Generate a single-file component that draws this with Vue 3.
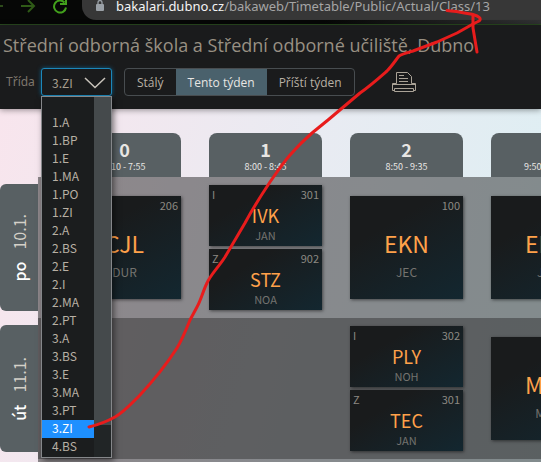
<script setup>
import { ref } from 'vue'

const classes = ['', '1.A', '1.BP', '1.E', '1.MA', '1.PO', '1.ZI', '2.A', '2.BS', '2.E', '2.I', '2.MA', '2.PT', '3.A', '3.BS', '3.E', '3.MA', '3.PT', '3.ZI', '4.BS']
const selected = ref('3.ZI')

const weeks = ['Stálý', 'Tento týden', 'Příští týden']
const week = ref('Tento týden')

const periods = [
  { n: 0, time: '7:10 - 7:55' },
  { n: 1, time: '8:00 - 8:45' },
  { n: 2, time: '8:50 - 9:35' },
  { n: 3, time: '9:50 - 10:35' }
]

const days = [
  {
    name: 'po', date: '10.1.', cells: [
      [{ s: 'CJL', t: 'DUR', room: '206' }],
      [{ s: 'IVK', t: 'JAN', room: '301', g: 'I' }, { s: 'STZ', t: 'NOA', room: '902', g: 'Z' }],
      [{ s: 'EKN', t: 'JEC', room: '100' }],
      [{ s: 'EKN', t: 'JEC', room: '' }]
    ]
  },
  {
    name: 'út', date: '11.1.', cells: [
      [],
      [],
      [{ s: 'PLY', t: 'NOH', room: '302', g: 'I' }, { s: 'TEC', t: 'JAN', room: '301', g: 'Z' }],
      [{ s: 'MAT', t: 'MAR', room: '' }]
    ]
  }
]
</script>

<template>
  <div class="page">
    <div class="browser">
      <svg class="nav" viewBox="0 0 80 24" width="80" height="24" fill="none" aria-hidden="true">
        <path d="M0 6h3" stroke="#2c4a1a" stroke-width="2" />
        <path d="M21 6h13M28 0l6 6-6 6" stroke="#2f5a17" stroke-width="2" />
        <path d="M64.500 2.500a6 6 0 1 0 1.500 5M66 -1v5h-6" stroke="#42a01c" stroke-width="2" />
      </svg>
      <div class="address">
        <svg class="lock" viewBox="0 0 8 12" width="8" height="12" aria-hidden="true">
          <rect y="4" width="8" height="7" rx="1" fill="#9aa0a6" />
          <path d="M2 5V2.500a2 2 0 0 1 4 0V5" fill="none" stroke="#9aa0a6" stroke-width="1.300" />
        </svg>
        <span class="url"><b>bakalari.dubno.cz</b>/bakaweb/Timetable/Public/Actual/Class/13</span>
      </div>
    </div>

    <header class="header">
      <h1>Střední odborná škola a Střední odborné učiliště, Dubno</h1>
      <div class="controls">
        <label for="class-select">Třída</label>
        <div class="picker">
          <select id="class-select" v-model="selected">
            <option v-for="c in classes" :key="c" :value="c">{{ c }}</option>
          </select>
          <svg class="chevron" viewBox="0 0 22 12" width="22" height="12" fill="none" aria-hidden="true">
            <path d="M1 1l10 9.500L21 1" stroke="#c9c4bb" stroke-width="1.500" />
          </svg>
          <div class="menu">
            <ul role="listbox" aria-label="Třída">
              <li v-for="c in classes" :key="c" role="option" :aria-selected="c === selected" :class="{ active: c === selected, blank: !c }" @click="selected = c">{{ c }}</li>
            </ul>
            <div class="track"><div class="thumb"></div></div>
          </div>
        </div>
        <div class="weeks">
          <button v-for="w in weeks" :key="w" type="button" :class="{ on: w === week }" @click="week = w">{{ w }}</button>
        </div>
        <button class="print" type="button" aria-label="Tisk">
          <svg viewBox="0 0 26 22" width="26" height="22" fill="none" stroke="#aaa397" aria-hidden="true">
            <path d="M5.500 12.500V1.500h11l4 4v7" />
            <path d="M8 4.500h5M8 7.500h9M8 10.500h9" />
            <path d="M5.500 12.500h-4v7h2M20.500 12.500h4v7h-2M1.500 13.500h23" />
            <path d="M3.500 17.500h19v3h-19z" />
          </svg>
        </button>
      </div>
    </header>

    <main class="board">
      <table>
        <thead>
          <tr>
            <td class="corner"></td>
            <th v-for="p in periods" :key="p.n" scope="col">
              <div class="period"><b>{{ p.n }}</b><span>{{ p.time }}</span></div>
            </th>
          </tr>
        </thead>
        <tbody>
          <tr v-for="d in days" :key="d.name">
            <th class="day" scope="row">
              <div class="tab"><span><b>{{ d.name }}</b>{{ d.date }}</span></div>
            </th>
            <td v-for="(cell, i) in d.cells" :key="i">
              <div class="stack" :class="{ split: cell.length > 1 }">
                <article v-for="l in cell" :key="l.s" class="lesson">
                  <span class="top"><span>{{ l.g }}</span><span>{{ l.room }}</span></span>
                  <strong>{{ l.s }}</strong>
                  <small>{{ l.t }}</small>
                </article>
              </div>
            </td>
          </tr>
          <tr>
            <td class="day"></td>
            <td v-for="p in periods" :key="p.n"><div class="stack"></div></td>
          </tr>
        </tbody>
      </table>
    </main>

    <svg class="ink" viewBox="0 0 541 462" width="541" height="462" fill="none" stroke="#e81c1c" stroke-width="3" stroke-linecap="round" stroke-linejoin="round" aria-hidden="true">
      <path d="M447 10.500C455 11 465 13 473 14.500C479 16 482 19 479 21C477 22 475 23 473 24L457 33L437 42L413 51C406 53 402 54 399 56C395 61 392 66 387 71C379 78 370 86 360 93L328 120L312 133C304 140 297 147 290 155C283 163 277 172 270 182C260 197 252 210 245 223L225 257C218 268 211 274 207 283C203 291 201 300 197 307L190 320C186 330 182 340 177 348C166 365 154 380 140 395C131 404 124 412 115 417C106 422 97 425 89 427" />
      <path d="M473 15L473 28L477 52" />
    </svg>
  </div>
</template>

<style>
body {
  margin: 0;
  background: #1a1b1c;
}
</style>

<style scoped>
.page {
  position: relative;
  height: 100vh;
  display: flex;
  flex-direction: column;
  overflow: hidden;
  font-family: "Noto Sans CJK SC", "Noto Sans", sans-serif;
  color: #aaa397;
}

.browser {
  display: flex;
  flex: none;
  height: 24px;
  background: linear-gradient(90deg, #060706 60%, #303132);
  border-bottom: 1px solid #2a4a20;
}

.address {
  display: flex;
  flex: 1;
  gap: 12px;
  height: 20px;
  margin-left: 2px;
  padding-left: 14px;
  background: #373737;
  border-bottom-left-radius: 14px;
}

.url {
  font: 13px/13px "Noto Sans", sans-serif;
  color: #a5a5a5;
  white-space: nowrap;
}

.url b {
  font-weight: 400;
  color: #f4f4f4;
}

.header {
  flex: none;
  position: relative;
  z-index: 2;
  padding: 5px 3px 13px;
  background: #1a1b1c;
  box-shadow: 0 1px 6px rgba(0, 0, 0, 0.4);
}

h1 {
  margin: 0;
  font-family: "Open Sans", sans-serif;
  font-size: 18px;
  line-height: 30px;
  font-weight: 400;
  color: #989083;
  white-space: nowrap;
}

.controls {
  display: flex;
  align-items: center;
  margin-top: 8px;
  font-size: 12px;
}

label {
  width: 38px;
  box-sizing: border-box;
  padding-left: 3px;
  font-family: "Noto Sans", sans-serif;
  line-height: 28px;
  color: #7d766c;
}

.picker {
  position: relative;
  width: 71px;
  height: 28px;
}

select {
  appearance: none;
  width: 100%;
  height: 100%;
  padding: 0 10px;
  border: 1px solid #1c87ba;
  border-radius: 3px;
  background: #1a1b1c;
  box-shadow: 0 0 4px #0d5a80;
  font: inherit;
  color: #a89f90;
  outline: none;
}

.chevron {
  position: absolute;
  top: 9px;
  right: 6px;
  pointer-events: none;
}

.menu {
  position: absolute;
  top: 28px;
  left: 0;
  right: 0;
  display: flex;
  border: 1px solid #85878a;
  background: #1b1d1e;
  box-shadow: 2px 3px 6px rgba(0, 0, 0, 0.5);
}

ul {
  flex: 1;
  margin: 0;
  padding: 0 0 1px;
  list-style: none;
}

li {
  height: 18px;
  padding-left: 10px;
  line-height: 16px;
  color: #b8b0a4;
}

li.blank {
  height: 17px;
}

li.active {
  background: #1e90ff;
  color: #fff;
}

.track {
  width: 17px;
  background: #212526;
}

.thumb {
  height: 91%;
  background: #454a4c;
}

.weeks {
  display: flex;
  height: 28px;
  box-sizing: border-box;
  margin-left: 12px;
  border: 1px solid #484d50;
  border-radius: 4px;
  overflow: hidden;
}

.weeks button {
  padding: 0 12px;
  border: 0;
  background: none;
  font-family: "Open Sans", sans-serif;
  font-size: 12px;
  color: #b8b0a4;
  white-space: nowrap;
}

.weeks .on {
  background: #4a616c;
  color: #e8e6e3;
  font-weight: 500;
}

.print {
  display: flex;
  margin-left: 36px;
  padding: 0;
  border: 0;
  background: none;
}

.board {
  flex: 1;
  min-height: 0;
  overflow: hidden;
  background: linear-gradient(105deg, #f8e5ed, #e9ebf2 50%, #dceff3);
}

table {
  width: 618px;
  table-layout: fixed;
  border-collapse: collapse;
}

th,
td {
  padding: 0 14px;
  font-weight: 400;
}

.corner,
.day {
  width: 38px;
  padding: 0;
}

th:nth-child(2),
td:nth-child(2) {
  padding-left: 30px;
  width: 113px;
}

thead th {
  padding-top: 24px;
}

.period {
  display: flex;
  flex-direction: column;
  height: 44px;
  border-radius: 8px 8px 0 0;
  background: #586063;
  color: #e8e6e3;
  text-align: center;
}

.period b {
  font-size: 18px;
  line-height: 20px;
  padding-top: 6px;
  font-weight: 700;
}

.period span {
  font-size: 9px;
  line-height: 15px;
}

tbody tr:nth-child(odd) td:not(.day) {
  background: rgba(40, 40, 40, 0.5);
}

tbody tr:nth-child(even) td {
  background: rgba(40, 40, 40, 0.72);
}

.tab {
  display: flex;
  align-items: center;
  justify-content: center;
  height: 127px;
  border-radius: 6px 0 0 6px;
  background: #586063;
}

.tab span {
  writing-mode: vertical-rl;
  transform: rotate(180deg);
  font-size: 16px;
  line-height: 20px;
  color: #d4d0c8;
}

.tab b {
  margin-bottom: 12px;
  font-weight: 500;
  color: #fff;
}

.stack {
  display: flex;
  flex-direction: column;
  box-sizing: border-box;
  height: 141px;
  padding: 19px 0;
}

.stack.split {
  gap: 3px;
  padding: 8px 0;
}

.lesson {
  position: relative;
  display: flex;
  flex: 1;
  flex-direction: column;
  align-items: center;
  justify-content: center;
  background: linear-gradient(150deg, #191b1c 30%, #132730);
  box-shadow: 1px 1px 3px rgba(0, 0, 0, 0.5);
}

.top {
  position: absolute;
  top: 1px;
  left: 3px;
  right: 3px;
  display: flex;
  justify-content: space-between;
  font-size: 11px;
  line-height: 16px;
  color: #8c8982;
}

strong {
  margin-top: 18px;
  font-size: 23px;
  line-height: 30px;
  font-weight: 400;
  color: #ffa14a;
}

small {
  font-size: 12px;
  line-height: 28px;
  color: #74736f;
}

.split strong {
  margin-top: 17px;
  font-size: 18px;
  line-height: 22px;
}

.split small {
  font-size: 11px;
  line-height: 18px;
}

.ink {
  position: absolute;
  top: 0;
  left: 0;
  z-index: 3;
  pointer-events: none;
}
</style>
